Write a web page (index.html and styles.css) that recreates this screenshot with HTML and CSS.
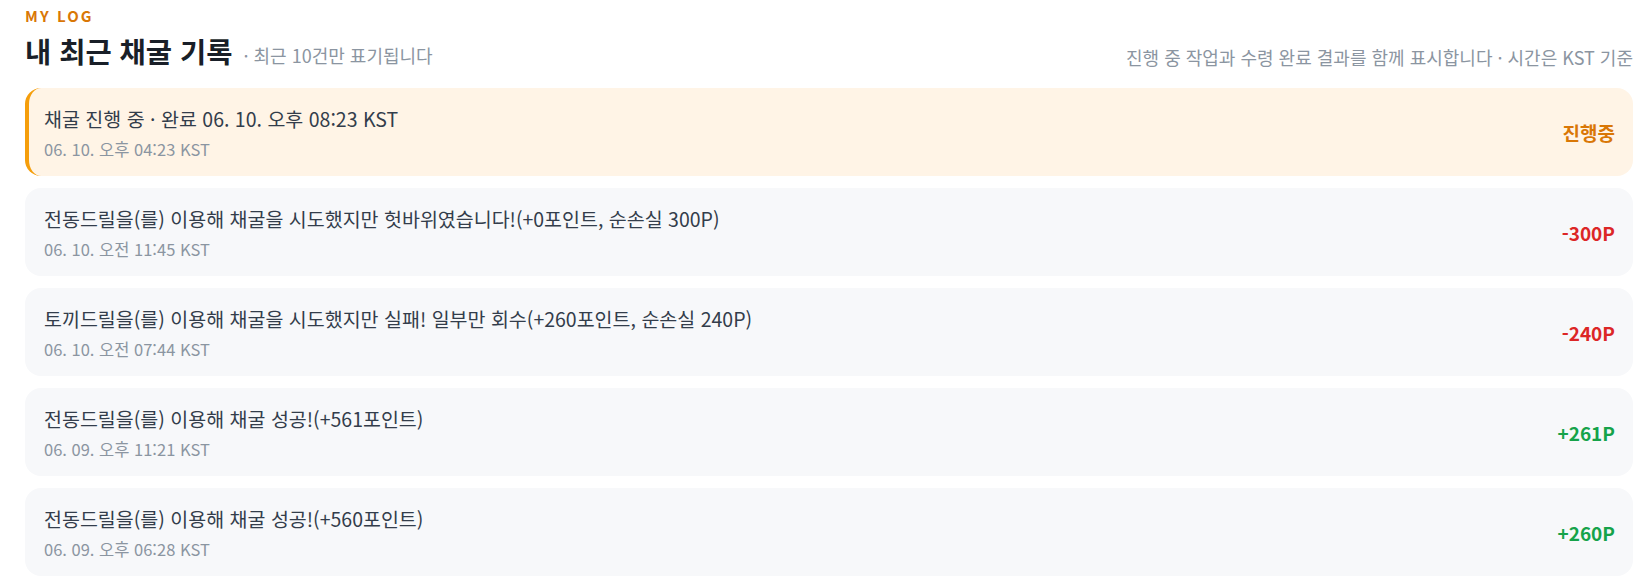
FILE: index.html
```html
<!DOCTYPE html>
<html lang="ko">
<head>
<meta charset="utf-8">
<title>MY LOG</title>
<link rel="stylesheet" href="styles.css">
</head>
<body>
<main class="wrap">
  <div class="eyebrow">MY LOG</div>
  <header class="head">
    <div class="head-left">
      <h1 class="title">내 최근 채굴 기록</h1>
      <span class="sub">· 최근 10건만 표기됩니다</span>
    </div>
    <p class="note">진행 중 작업과 수령 완료 결과를 함께 표시합니다 · 시간은 KST 기준</p>
  </header>
  <ul class="list">
    <li class="item active">
      <div class="info">
        <div class="msg">채굴 진행 중 · 완료 06. 10. 오후 08:23 KST</div>
        <div class="date">06. 10. 오후 04:23 KST</div>
      </div>
      <div class="val pending">진행중</div>
    </li>
    <li class="item">
      <div class="info">
        <div class="msg">전동드릴을(를) 이용해 채굴을 시도했지만 헛바위였습니다!(+0포인트, 순손실 300P)</div>
        <div class="date">06. 10. 오전 11:45 KST</div>
      </div>
      <div class="val loss">-300P</div>
    </li>
    <li class="item">
      <div class="info">
        <div class="msg">토끼드릴을(를) 이용해 채굴을 시도했지만 실패! 일부만 회수(+260포인트, 순손실 240P)</div>
        <div class="date">06. 10. 오전 07:44 KST</div>
      </div>
      <div class="val loss">-240P</div>
    </li>
    <li class="item">
      <div class="info">
        <div class="msg">전동드릴을(를) 이용해 채굴 성공!(+561포인트)</div>
        <div class="date">06. 09. 오후 11:21 KST</div>
      </div>
      <div class="val gain">+261P</div>
    </li>
    <li class="item">
      <div class="info">
        <div class="msg">전동드릴을(를) 이용해 채굴 성공!(+560포인트)</div>
        <div class="date">06. 09. 오후 06:28 KST</div>
      </div>
      <div class="val gain">+260P</div>
    </li>
  </ul>
</main>
</body>
</html>
```
FILE: styles.css
```css
* { box-sizing: border-box; }
html, body { margin: 0; padding: 0; background: #ffffff; }
body {
  font-family: "Noto Sans CJK KR", "Noto Sans", sans-serif;
  color: #333d4b;
}
.wrap {
  padding: 6px 15px 0 25px;
}
.eyebrow {
  font-size: 15px;
  font-weight: 700;
  letter-spacing: 0.14em;
  color: #d97706;
  line-height: 20px;
}
.head {
  display: flex;
  justify-content: space-between;
  align-items: flex-end;
  margin-top: 6px;
}
.head-left {
  display: flex;
  align-items: baseline;
}
.title {
  margin: 0;
  font-size: 28.5px;
  font-weight: 700;
  color: #191f28;
  line-height: 38px;
}
.sub {
  margin-left: 11px;
  font-size: 18px;
  color: #8b95a1;
}
.note {
  margin: 0 0 1px;
  font-size: 18px;
  color: #8b95a1;
  line-height: 24px;
}
.list {
  list-style: none;
  margin: 18px 0 0;
  padding: 0;
  display: flex;
  flex-direction: column;
  gap: 12px;
}
.item {
  display: flex;
  align-items: center;
  justify-content: space-between;
  background: #f7f8fa;
  border-radius: 16px;
  padding: 17px 18px 16px 19px;
  min-height: 88px;
}
.item.active {
  background: #fff4e6;
  border-left: 4px solid #f59e0b;
  padding-left: 15px;
}
.msg {
  font-size: 19.5px;
  line-height: 28px;
  color: #333d4b;
}
.date {
  margin-top: 5px;
  font-size: 16.5px;
  line-height: 22px;
  color: #8b95a1;
}
.val {
  font-size: 19px;
  font-weight: 700;
}
.pending { color: #d97706; }
.loss { color: #dc2626; }
.gain { color: #16a34a; }
```
